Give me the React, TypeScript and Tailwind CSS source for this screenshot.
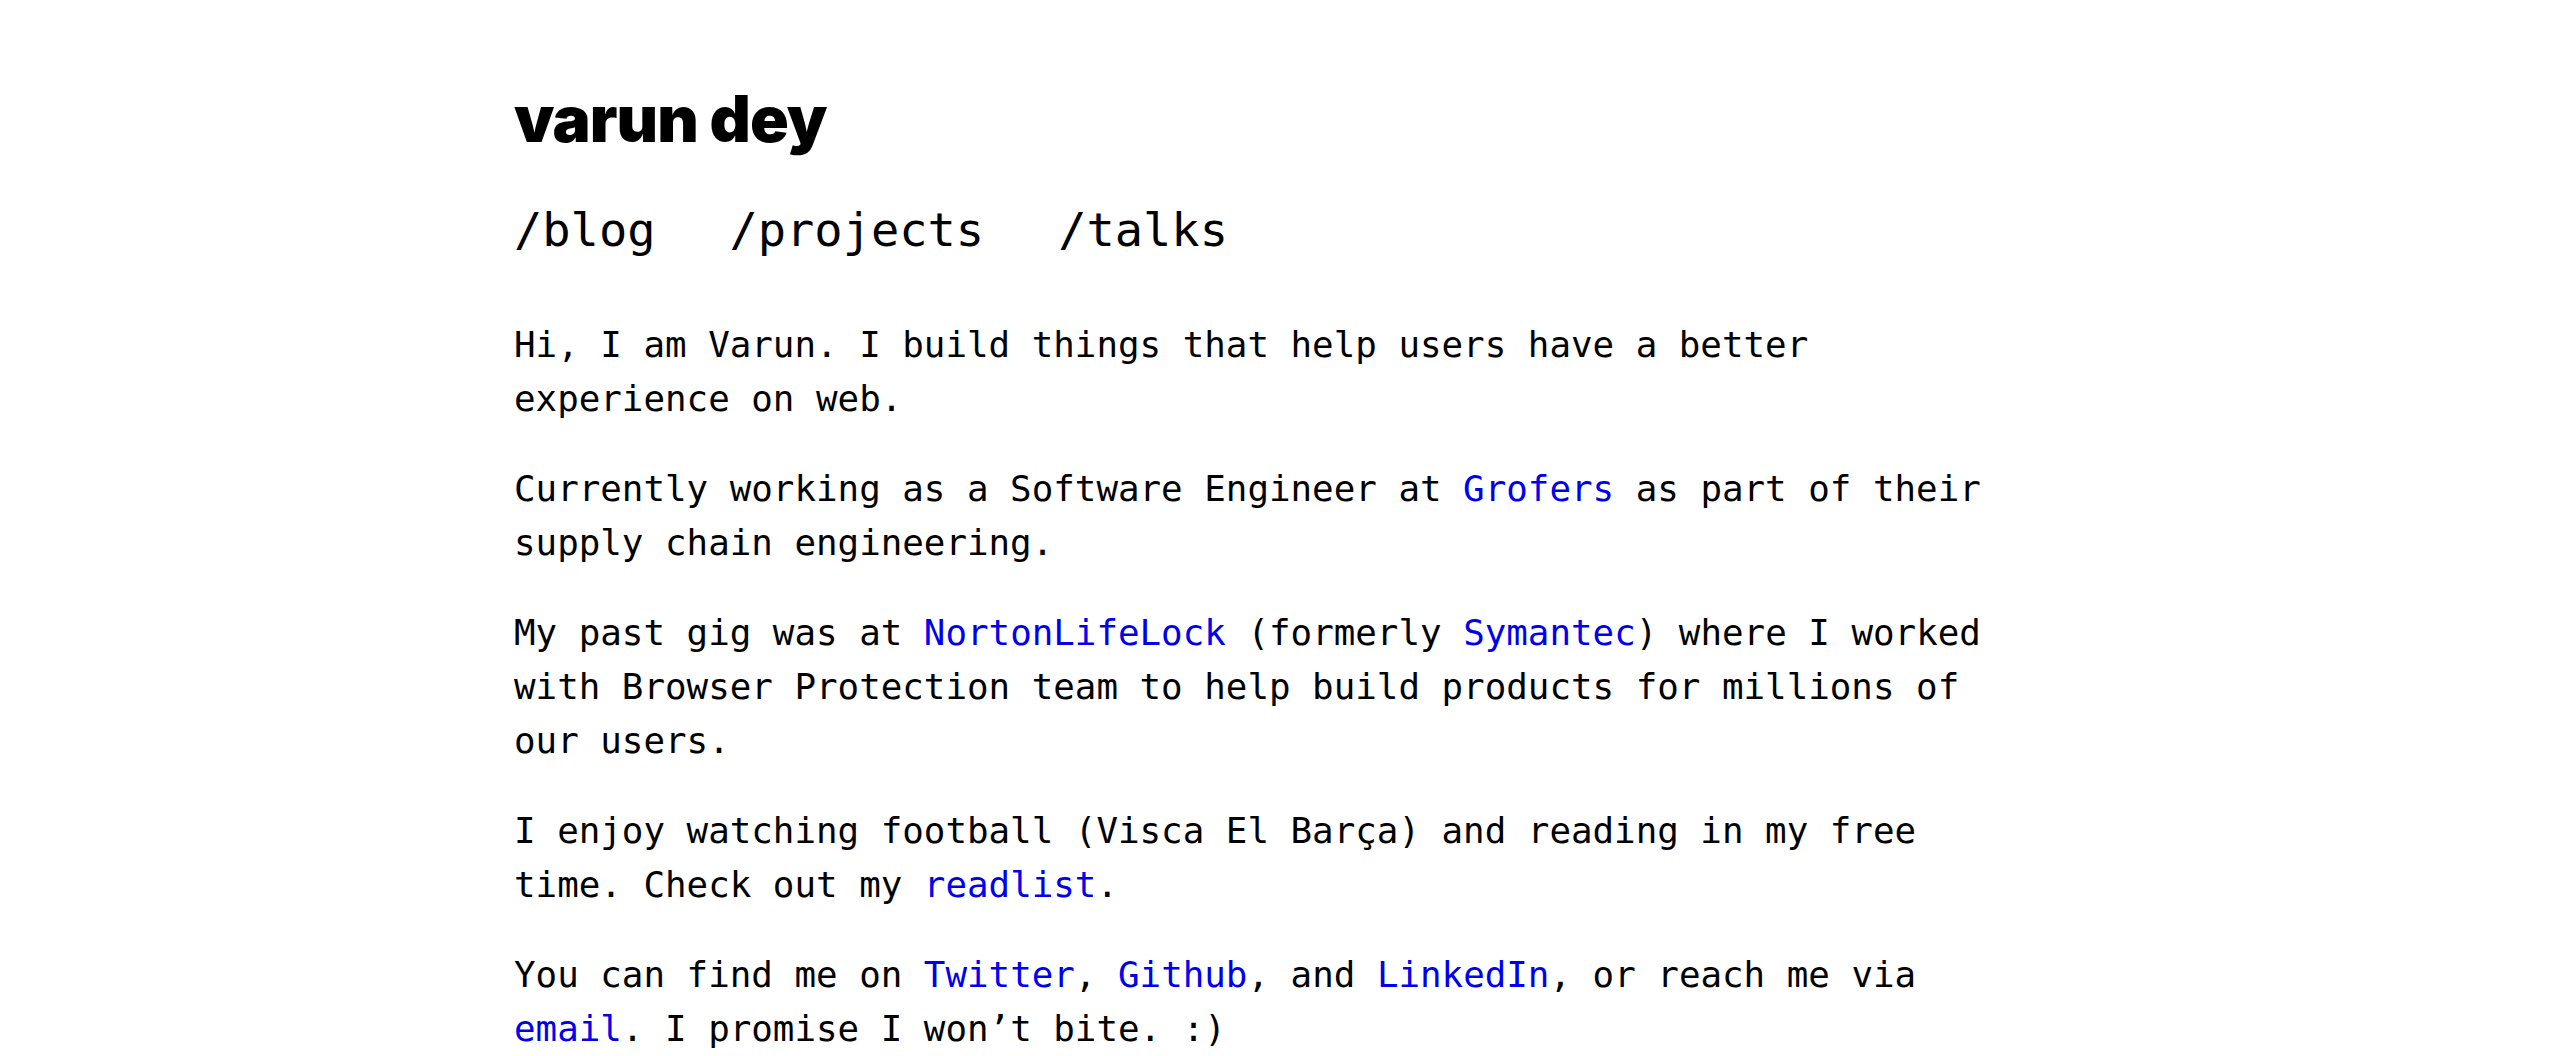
import React from "react";

const mono = "font-['DejaVu_Sans_Mono','Liberation_Mono',monospace]";

function Link({ children }: { children: React.ReactNode }) {
  return (
    <a href="#" className="text-[#0000ee] no-underline">
      {children}
    </a>
  );
}

export default function App() {
  return (
    <div className="min-h-screen bg-white text-black">
      <main className="mx-auto w-[1532px] pt-[87px]">
        {/* Header */}
        <h1 className="font-['Inter',sans-serif] text-[64px] leading-none font-black tracking-[-0.015em]">
          varun dey
        </h1>

        <nav className={`${mono} mt-[43px] flex gap-[74px] text-[47px] leading-[72px]`}>
          <a href="#">/blog</a>
          <a href="#">/projects</a>
          <a href="#">/talks</a>
        </nav>

        {/* About */}
        <section className={`${mono} mt-[52px] max-w-[1500px] text-[35.85px] leading-[54px] flex flex-col gap-[36px]`}>
          <p>
            Hi, I am Varun. I build things that help users have a better
            experience on web.
          </p>
          <p>
            Currently working as a Software Engineer at <Link>Grofers</Link> as
            part of their supply chain engineering.
          </p>
          <p>
            My past gig was at <Link>NortonLifeLock</Link> (formerly{" "}
            <Link>Symantec</Link>) where I worked with Browser Protection team
            to help build products for millions of our users.
          </p>
          <p>
            I enjoy watching football (Visca El Barça) and reading in my free
            time. Check out my <Link>readlist</Link>.
          </p>
          <p>
            You can find me on <Link>Twitter</Link>, <Link>Github</Link>, and{" "}
            <Link>LinkedIn</Link>, or reach me via <Link>email</Link>. I promise
            I won’t bite. :)
          </p>
        </section>
      </main>
    </div>
  );
}
